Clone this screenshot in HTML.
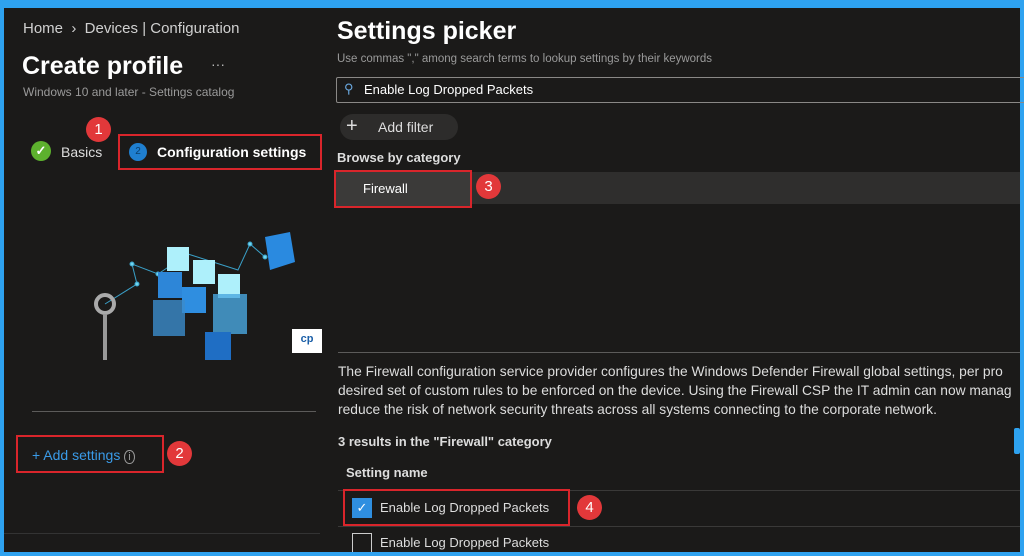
<!DOCTYPE html>
<html><head><style>
*{margin:0;padding:0;box-sizing:border-box}
body{width:1024px;height:556px;background:#2ea2f0;font-family:"Liberation Sans",sans-serif;color:#fff;position:relative;overflow:hidden}
.main{position:absolute;left:4px;top:8px;width:1016px;height:544px;background:#1b1a19}
.a{position:absolute;white-space:nowrap}
.red{position:absolute;border:2px solid #d9252b}
.badge{position:absolute;width:25px;height:25px;border-radius:50%;background:#e2383a;color:#fff;font-size:15px;text-align:center;line-height:25px}
.line{position:absolute;height:1px;background:#5c5b5a}
</style></head><body>
<div class="main"></div>
<div class="a" style="left:23px;top:20px;font-size:15px;color:#d0d0d0">Home &nbsp;›&nbsp; Devices | Configuration</div>
<div class="a" style="left:22px;top:52px;font-size:25px;font-weight:bold">Create profile</div>
<div class="a" style="left:211px;top:56px;font-size:14px;color:#bbb">···</div>
<div class="a" style="left:23px;top:85px;font-size:12px;color:#9a9a9a">Windows 10 and later - Settings catalog</div>
<div class="a" style="left:31px;top:141px;width:20px;height:20px;border-radius:50%;background:#5db12e;color:#fff;font-size:13px;text-align:center;line-height:20px;font-weight:bold">✓</div>
<div class="a" style="left:61px;top:144px;font-size:14px;color:#ddd">Basics</div>
<div class="a" style="left:129px;top:143px;width:18px;height:18px;border-radius:50%;background:#1f7fd0;color:#0a3e6b;font-size:10px;text-align:center;line-height:18px">2</div>
<div class="a" style="left:157px;top:144px;font-size:14px;font-weight:bold">Configuration settings</div>
<div class="red" style="left:118px;top:134px;width:204px;height:36px"></div>
<div class="badge" style="left:86px;top:117px">1</div>
<!-- illustration -->
<svg class="a" style="left:85px;top:232px" width="230" height="130">
<g stroke="#3aa0c8" stroke-width="1" fill="#6fd6f0"><polyline points="20,72 52,52 47,32 73,42 103,22 153,38 165,12 180,25" fill="none"/><circle cx="47" cy="32" r="2"/><circle cx="52" cy="52" r="2"/><circle cx="73" cy="42" r="2"/><circle cx="165" cy="12" r="2"/><circle cx="180" cy="25" r="2"/></g>
<rect x="82" y="15" width="22" height="24" fill="#aef0fb"/><rect x="108" y="28" width="22" height="24" fill="#aef0fb"/><rect x="133" y="42" width="22" height="24" fill="#aef0fb"/>
<rect x="73" y="40" width="24" height="26" fill="#2d86d8"/><rect x="97" y="55" width="24" height="26" fill="#2f8ee0"/>
<rect x="68" y="68" width="32" height="36" fill="#3b8ccc" opacity=".8"/><rect x="128" y="62" width="34" height="40" fill="#4aa8e0" opacity=".8"/>
<rect x="120" y="100" width="26" height="28" fill="#1f6ec4"/>
<path d="M180 5 L205 0 L210 30 L185 38 Z" fill="#2a8ae0"/>
<circle cx="20" cy="72" r="9" fill="none" stroke="#aaa" stroke-width="4"/><rect x="18" y="82" width="4" height="46" fill="#999"/>
</svg>
<div class="a" style="left:292px;top:329px;width:30px;height:24px;background:#fff;color:#1b5fa8;font-size:11px;text-align:center;font-weight:bold;line-height:20px">cp</div>
<div class="line" style="left:32px;top:411px;width:284px"></div>
<div class="line" style="left:4px;top:533px;width:316px;background:#333"></div>
<div class="a" style="left:32px;top:447px;font-size:14px;color:#3a9be8">+ Add settings <span style="color:#999;font-size:11px;border:1px solid #999;border-radius:50%;padding:0 3px">i</span></div>
<div class="red" style="left:16px;top:435px;width:148px;height:38px"></div>
<div class="badge" style="left:167px;top:441px">2</div>
<!-- right -->
<div class="a" style="left:337px;top:17px;font-size:25px;font-weight:bold">Settings picker</div>
<div class="a" style="left:337px;top:53px;font-size:11.5px;color:#9a9a9a">Use commas "," among search terms to lookup settings by their keywords</div>
<div class="a" style="left:336px;top:77px;width:690px;height:26px;border:1px solid #8a8886;border-radius:2px"></div>
<div class="a" style="left:344px;top:81px;font-size:13px;color:#6aa8e0">⚲</div>
<div class="a" style="left:364px;top:82px;font-size:13px">Enable Log Dropped Packets</div>
<div class="a" style="left:340px;top:114px;width:118px;height:26px;border-radius:13px;background:#2d2c2b"></div>
<div class="a" style="left:346px;top:114px;font-size:20px;color:#ddd;line-height:24px">+</div>
<div class="a" style="left:378px;top:119px;font-size:14px;color:#ddd">Add filter</div>
<div class="a" style="left:337px;top:150px;font-size:13px;font-weight:bold;color:#ddd">Browse by category</div>
<div class="a" style="left:336px;top:172px;width:684px;height:32px;background:#2f2e2d"></div>
<div class="a" style="left:336px;top:172px;width:134px;height:34px;background:#3b3a39"></div>
<div class="red" style="left:334px;top:170px;width:138px;height:38px"></div>
<div class="a" style="left:363px;top:181px;font-size:13px">Firewall</div>
<div class="badge" style="left:476px;top:174px">3</div>
<div class="line" style="left:338px;top:352px;width:682px"></div>
<div class="a" style="left:338px;top:362px;width:682px;overflow:hidden;font-size:13.8px;line-height:19px;color:#ddd">The Firewall configuration service provider configures the Windows Defender Firewall global settings, per pro<br>desired set of custom rules to be enforced on the device. Using the Firewall CSP the IT admin can now manag<br>reduce the risk of network security threats across all systems connecting to the corporate network.</div>
<div class="a" style="left:338px;top:434px;font-size:13px;font-weight:bold;color:#ddd">3 results in the "Firewall" category</div>
<div class="a" style="left:1014px;top:428px;width:6px;height:26px;background:#2ea2f0;border-radius:2px"></div>
<div class="a" style="left:346px;top:465px;font-size:13px;font-weight:bold;color:#ddd">Setting name</div>
<div class="line" style="left:338px;top:490px;width:682px;background:#3a3938"></div>
<div class="a" style="left:352px;top:498px;width:20px;height:20px;background:#2f8fe0;color:#fff;font-size:13px;text-align:center;line-height:20px">✓</div>
<div class="a" style="left:380px;top:500px;font-size:13px;color:#ddd">Enable Log Dropped Packets</div>
<div class="red" style="left:343px;top:489px;width:227px;height:37px"></div>
<div class="badge" style="left:577px;top:495px">4</div>
<div class="line" style="left:338px;top:526px;width:682px;background:#3a3938"></div>
<div class="a" style="left:352px;top:533px;width:20px;height:20px;border:1px solid #ccc"></div>
<div class="a" style="left:380px;top:535px;font-size:13px;color:#ddd">Enable Log Dropped Packets</div>
<div class="a" style="left:0;top:552px;width:1024px;height:4px;background:#2ea2f0"></div>
</body></html>
